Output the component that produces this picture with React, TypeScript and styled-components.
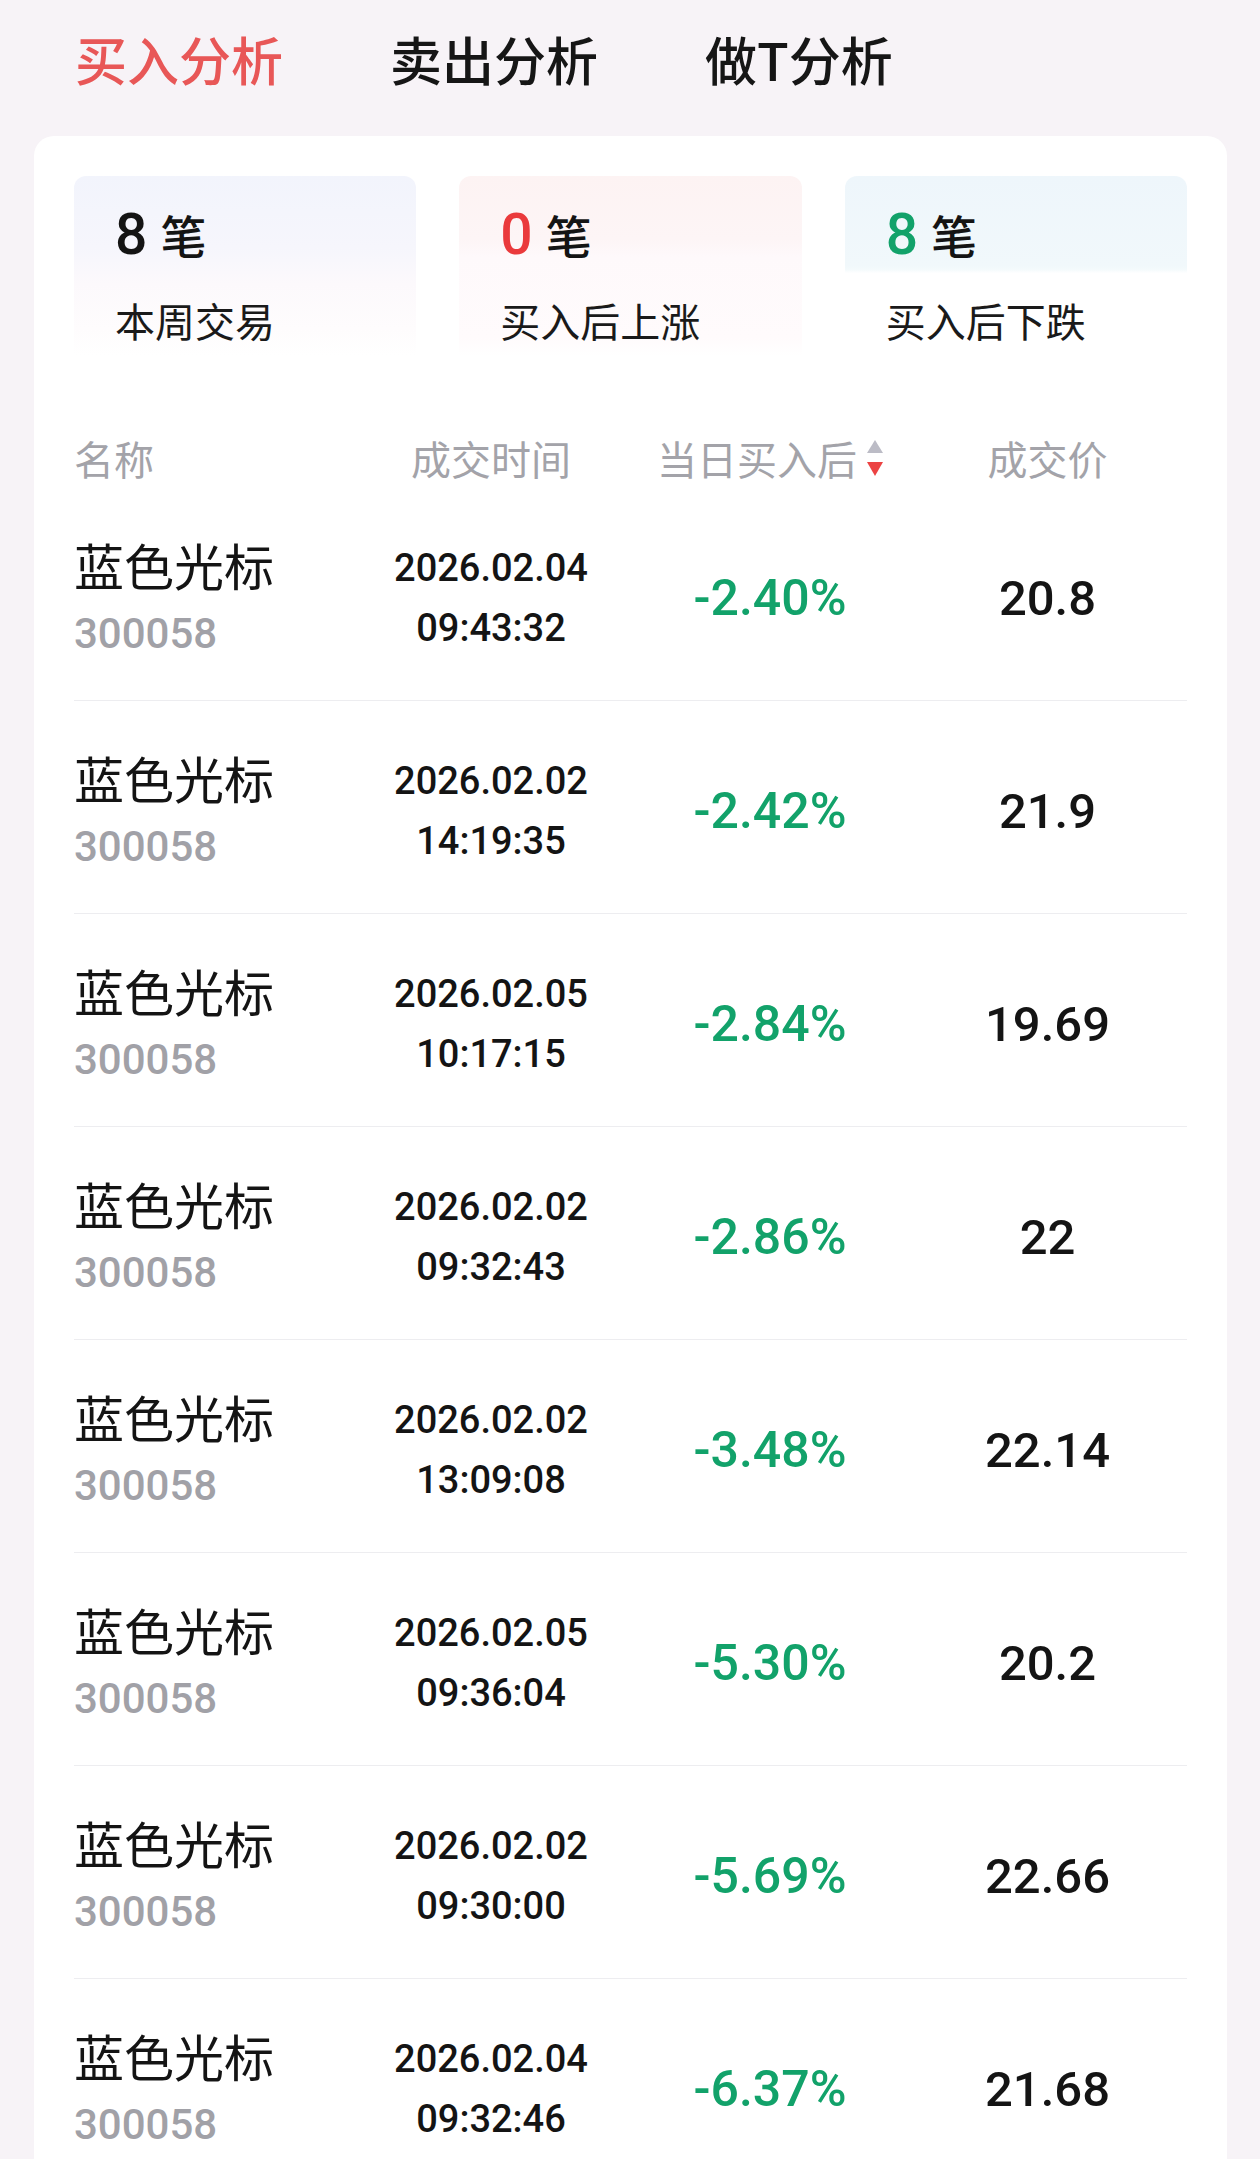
import React from 'react';
import styled, { createGlobalStyle } from 'styled-components';

const GlobalStyle = createGlobalStyle`
  html, body {
    margin: 0;
    padding: 0;
    background: #f7f3f7;
  }
  body {
    font-family: Roboto, "Noto Sans CJK SC", sans-serif;
    color: #141414;
  }
`;

const Page = styled.div`
  padding: 0 33px 0 34px;
  background: #f7f3f7;
  min-height: 2159px;
`;

const Tabs = styled.div`
  display: flex;
  gap: 107px;
  padding: 24px 0 0 41px;
  margin-bottom: 42px;
`;

const Tab = styled.div<{ $active?: boolean }>`
  font-family: "Noto Sans CJK SC", sans-serif;
  font-size: 52px;
  line-height: 70px;
  font-weight: 500;
  color: ${p => (p.$active ? '#e85757' : '#161616')};
`;

const Card = styled.div`
  background: #ffffff;
  border-radius: 20px 20px 0 0;
  padding: 40px 40px 0 40px;
`;

const Stats = styled.div`
  display: grid;
  grid-template-columns: repeat(3, 1fr);
  gap: 43px;
`;

const statBg = {
  total: 'linear-gradient(180deg, #f2f4fc 0%, #f6f6fc 40%, #fcf9fc 60%, #fefcfd 85%, #ffffff 100%)',
  up: 'linear-gradient(180deg, #fdf3f3 0%, #fdf5f6 35%, #fef9fb 45%, #fffbfc 90%, #ffffff 100%)',
  down: 'linear-gradient(180deg, #eef6fb 0%, #f1f8fb 50%, #f4fafc 52%, #ffffff 54%, #ffffff 100%)',
};

const StatBox = styled.div<{ $kind: 'total' | 'up' | 'down' }>`
  height: 180px;
  box-sizing: border-box;
  padding: 28px 0 0 41px;
  border-radius: 12px 12px 0 0;
  background: ${p => statBg[p.$kind]};
`;

const StatValue = styled.div`
  display: flex;
  align-items: baseline;
  height: 60px;
  line-height: 60px;
`;

const StatNum = styled.span<{ $color: string }>`
  font-family: Roboto, sans-serif;
  font-size: 57px;
  font-weight: 500;
  color: ${p => p.$color};
`;

const StatUnit = styled.span`
  font-family: "Noto Sans CJK SC", sans-serif;
  font-size: 46px;
  font-weight: 500;
  margin-left: 13px;
  color: #141414;
`;

const StatLabel = styled.div`
  margin-top: 32px;
  font-family: "Noto Sans CJK SC", sans-serif;
  font-size: 40px;
  line-height: 48px;
  color: #1a1a1a;
`;

const cols = '240px 354px 204px 1fr';

const HeadRow = styled.div`
  display: grid;
  grid-template-columns: ${cols};
  align-items: center;
  height: 60px;
  margin-top: 72px;
`;

const HeadCell = styled.div<{ $left?: boolean; $pad?: number }>`
  font-family: "Noto Sans CJK SC", sans-serif;
  font-size: 40px;
  line-height: 60px;
  color: #a3a3a9;
  white-space: nowrap;
  padding-left: ${p => p.$pad || 0}px;
  display: flex;
  align-items: center;
  justify-content: ${p => (p.$left ? 'flex-start' : 'center')};
`;

const SortIcon = styled.span`
  display: inline-flex;
  flex-direction: column;
  gap: 9px;
  margin-left: 10px;
`;

const TriUp = styled.span`
  width: 0;
  height: 0;
  border-left: 8px solid transparent;
  border-right: 8px solid transparent;
  border-bottom: 13px solid #bcbcc6;
`;

const TriDown = styled.span`
  width: 0;
  height: 0;
  border-left: 8px solid transparent;
  border-right: 8px solid transparent;
  border-top: 14px solid #ec4343;
`;

const Row = styled.div`
  display: grid;
  grid-template-columns: ${cols};
  align-items: center;
  height: 213px;
  box-sizing: border-box;
  padding-top: 8px;
  border-bottom: 1px solid #ededf0;
`;

const NameCell = styled.div``;

const StockName = styled.div`
  font-family: "Noto Sans CJK SC", sans-serif;
  font-size: 50px;
  line-height: 60px;
  color: #141414;
`;

const StockCode = styled.div`
  margin-top: 12px;
  font-family: Roboto, sans-serif;
  font-size: 42px;
  font-weight: 500;
  line-height: 56px;
  color: #a1a1a7;
`;

const TimeCell = styled.div`
  text-align: center;
  font-family: Roboto, sans-serif;
  font-size: 38px;
  font-weight: 500;
  line-height: 60px;
  color: #141414;
`;

const PctCell = styled.div`
  text-align: center;
  font-family: Roboto, sans-serif;
  font-size: 50px;
  font-weight: 500;
  color: #12a26a;
`;

const PriceCell = styled.div`
  text-align: center;
  padding-left: 36px;
  font-family: Roboto, sans-serif;
  font-size: 49px;
  font-weight: 500;
  color: #141414;
`;

const trades = [
  { date: '2026.02.04', time: '09:43:32', pct: '-2.40%', price: '20.8' },
  { date: '2026.02.02', time: '14:19:35', pct: '-2.42%', price: '21.9' },
  { date: '2026.02.05', time: '10:17:15', pct: '-2.84%', price: '19.69' },
  { date: '2026.02.02', time: '09:32:43', pct: '-2.86%', price: '22' },
  { date: '2026.02.02', time: '13:09:08', pct: '-3.48%', price: '22.14' },
  { date: '2026.02.05', time: '09:36:04', pct: '-5.30%', price: '20.2' },
  { date: '2026.02.02', time: '09:30:00', pct: '-5.69%', price: '22.66' },
  { date: '2026.02.04', time: '09:32:46', pct: '-6.37%', price: '21.68' },
];

const App: React.FC = () => {
  return (
    <Page>
      <GlobalStyle />
      <Tabs>
        <Tab $active>买入分析</Tab>
        <Tab>卖出分析</Tab>
        <Tab>做T分析</Tab>
      </Tabs>

      <Card>
        <Stats>
          <StatBox $kind="total">
            <StatValue>
              <StatNum $color="#141414">8</StatNum>
              <StatUnit>笔</StatUnit>
            </StatValue>
            <StatLabel>本周交易</StatLabel>
          </StatBox>
          <StatBox $kind="up">
            <StatValue>
              <StatNum $color="#ea3a3c">0</StatNum>
              <StatUnit>笔</StatUnit>
            </StatValue>
            <StatLabel>买入后上涨</StatLabel>
          </StatBox>
          <StatBox $kind="down">
            <StatValue>
              <StatNum $color="#12a26a">8</StatNum>
              <StatUnit>笔</StatUnit>
            </StatValue>
            <StatLabel>买入后下跌</StatLabel>
          </StatBox>
        </Stats>

        <HeadRow>
          <HeadCell $left>名称</HeadCell>
          <HeadCell>成交时间</HeadCell>
          <HeadCell>
            当日买入后
            <SortIcon>
              <TriUp />
              <TriDown />
            </SortIcon>
          </HeadCell>
          <HeadCell $pad={36}>成交价</HeadCell>
        </HeadRow>

        {trades.map((t, i) => (
          <Row key={i}>
            <NameCell>
              <StockName>蓝色光标</StockName>
              <StockCode>300058</StockCode>
            </NameCell>
            <TimeCell>
              <div>{t.date}</div>
              <div>{t.time}</div>
            </TimeCell>
            <PctCell>{t.pct}</PctCell>
            <PriceCell>{t.price}</PriceCell>
          </Row>
        ))}
      </Card>
    </Page>
  );
};

export default App;
